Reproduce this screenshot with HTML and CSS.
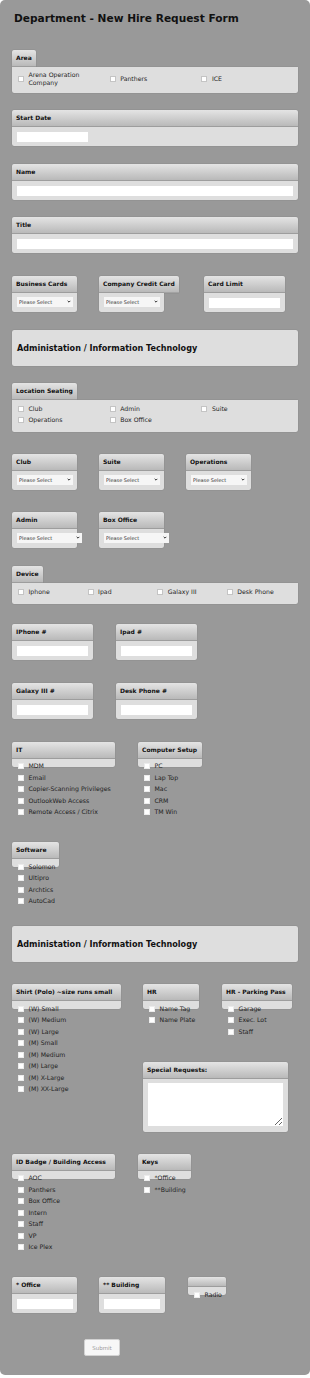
FILE: index.html
```html
<!DOCTYPE html>
<html lang="en">
<head>
  <meta charset="UTF-8">
  <meta name="viewport" content="width=device-width, initial-scale=1.0">
  <title>Department - New Hire Request Form</title>
  <link rel="stylesheet" href="styles.css">
</head>
<body>
<div class="page">
  <h1 class="form-title">Department - New Hire Request Form</h1>

  <!-- Area -->
  <div class="section first">
    <div class="tab">Area</div>
    <div class="panel-body cols-3 area-body">
      <label class="opt"><input type="checkbox"><span>Arena Operation<br>Company</span></label>
      <label class="opt"><input type="checkbox"><span>Panthers</span></label>
      <label class="opt"><input type="checkbox"><span>ICE</span></label>
    </div>
  </div>

  <div class="section gap-17">
    <div class="box-head">Start Date</div>
    <div class="box-body"><input type="text" class="text-in"></div>
  </div>

  <div class="section gap-18">
    <div class="box-head">Name</div>
    <div class="box-body"><input type="text" class="text-in full"></div>
  </div>

  <div class="section gap-17">
    <div class="box-head">Title</div>
    <div class="box-body"><input type="text" class="text-in full"></div>
  </div>

  <div class="row gap-23">
    <div class="box w65">
      <div class="box-head">Business Cards</div>
      <div class="box-body"><span class="sel-wrap"><select class="sel"><option>Please Select</option></select><svg class="chev" viewBox="0 0 6 4"><path d="M1 1l2 2 2-2" /></svg></span></div>
    </div>
    <div class="box w65">
      <div class="box-head">Company Credit Card</div>
      <div class="box-body"><span class="sel-wrap"><select class="sel"><option>Please Select</option></select><svg class="chev" viewBox="0 0 6 4"><path d="M1 1l2 2 2-2" /></svg></span></div>
    </div>
    <div class="box w81 card-limit">
      <div class="box-head">Card Limit</div>
      <div class="box-body"><input type="text" class="text-in"></div>
    </div>
  </div>

  <div class="banner gap-18">Administation / Information Technology</div>

  <!-- Location Seating -->
  <div class="section gap-17">
    <div class="tab">Location Seating</div>
    <div class="panel-body cols-3">
      <label class="opt"><input type="checkbox"><span>Club</span></label>
      <label class="opt"><input type="checkbox"><span>Admin</span></label>
      <label class="opt"><input type="checkbox"><span>Suite</span></label>
      <label class="opt"><input type="checkbox"><span>Operations</span></label>
      <label class="opt"><input type="checkbox"><span>Box Office</span></label>
    </div>
  </div>

  <div class="row gap-22">
    <div class="box w65">
      <div class="box-head">Club</div>
      <div class="box-body"><span class="sel-wrap"><select class="sel"><option>Please Select</option></select><svg class="chev" viewBox="0 0 6 4"><path d="M1 1l2 2 2-2" /></svg></span></div>
    </div>
    <div class="box w65">
      <div class="box-head">Suite</div>
      <div class="box-body"><span class="sel-wrap"><select class="sel"><option>Please Select</option></select><svg class="chev" viewBox="0 0 6 4"><path d="M1 1l2 2 2-2" /></svg></span></div>
    </div>
    <div class="box w65">
      <div class="box-head">Operations</div>
      <div class="box-body"><span class="sel-wrap"><select class="sel"><option>Please Select</option></select><svg class="chev" viewBox="0 0 6 4"><path d="M1 1l2 2 2-2" /></svg></span></div>
    </div>
  </div>

  <div class="row gap-22">
    <div class="box w65">
      <div class="box-head">Admin</div>
      <div class="box-body"><span class="sel-wrap"><select class="sel wide"><option>Please Select</option></select><svg class="chev" viewBox="0 0 6 4"><path d="M1 1l2 2 2-2" /></svg></span></div>
    </div>
    <div class="box w65">
      <div class="box-head">Box Office</div>
      <div class="box-body"><span class="sel-wrap"><select class="sel wide"><option>Please Select</option></select><svg class="chev" viewBox="0 0 6 4"><path d="M1 1l2 2 2-2" /></svg></span></div>
    </div>
  </div>

  <!-- Device -->
  <div class="section gap-18">
    <div class="tab">Device</div>
    <div class="panel-body cols-4">
      <label class="opt"><input type="checkbox"><span>Iphone</span></label>
      <label class="opt"><input type="checkbox"><span>Ipad</span></label>
      <label class="opt"><input type="checkbox"><span>Galaxy III</span></label>
      <label class="opt"><input type="checkbox"><span>Desk Phone</span></label>
    </div>
  </div>

  <div class="row gap-20">
    <div class="box w81">
      <div class="box-head">IPhone #</div>
      <div class="box-body"><input type="text" class="text-in"></div>
    </div>
    <div class="box w81 nudge">
      <div class="box-head">Ipad #</div>
      <div class="box-body"><input type="text" class="text-in"></div>
    </div>
  </div>

  <div class="row gap-23">
    <div class="box w81">
      <div class="box-head">Galaxy III #</div>
      <div class="box-body"><input type="text" class="text-in"></div>
    </div>
    <div class="box w81 nudge">
      <div class="box-head">Desk Phone #</div>
      <div class="box-body"><input type="text" class="text-in"></div>
    </div>
  </div>

  <!-- IT / Computer setup -->
  <div class="row gap-23">
    <div class="group w103">
      <div class="box-head">IT</div>
      <div class="strip"></div>
      <div class="opt-list">
        <label class="opt"><input type="checkbox"><span>MDM</span></label>
        <label class="opt"><input type="checkbox"><span>Email</span></label>
        <label class="opt"><input type="checkbox"><span>Copier-Scanning Privileges</span></label>
        <label class="opt"><input type="checkbox"><span>OutlookWeb Access</span></label>
        <label class="opt"><input type="checkbox"><span>Remote Access / Citrix</span></label>
      </div>
    </div>
    <div class="group w64 nudge">
      <div class="box-head">Computer Setup</div>
      <div class="strip"></div>
      <div class="opt-list">
        <label class="opt"><input type="checkbox"><span>PC</span></label>
        <label class="opt"><input type="checkbox"><span>Lap Top</span></label>
        <label class="opt"><input type="checkbox"><span>Mac</span></label>
        <label class="opt"><input type="checkbox"><span>CRM</span></label>
        <label class="opt"><input type="checkbox"><span>TM Win</span></label>
      </div>
    </div>
  </div>

  <div class="row gap-24">
    <div class="group w47">
      <div class="box-head">Software</div>
      <div class="strip"></div>
      <div class="opt-list">
        <label class="opt"><input type="checkbox"><span>Solomon</span></label>
        <label class="opt"><input type="checkbox"><span>Ultipro</span></label>
        <label class="opt"><input type="checkbox"><span>Archtics</span></label>
        <label class="opt"><input type="checkbox"><span>AutoCad</span></label>
      </div>
    </div>
  </div>

  <div class="banner gap-19">Administation / Information Technology</div>

  <!-- Apparel / HR -->
  <div class="row gap-22">
    <div class="group w109">
      <div class="box-head">Shirt (Polo) ~size runs small</div>
      <div class="strip"></div>
      <div class="opt-list">
        <label class="opt"><input type="checkbox"><span>(W) Small</span></label>
        <label class="opt"><input type="checkbox"><span>(W) Medium</span></label>
        <label class="opt"><input type="checkbox"><span>(W) Large</span></label>
        <label class="opt"><input type="checkbox"><span>(M) Small</span></label>
        <label class="opt"><input type="checkbox"><span>(M) Medium</span></label>
        <label class="opt"><input type="checkbox"><span>(M) Large</span></label>
        <label class="opt"><input type="checkbox"><span>(M) X-Large</span></label>
        <label class="opt"><input type="checkbox"><span>(M) XX-Large</span></label>
      </div>
    </div>
    <div class="side">
      <div class="row">
        <div class="group w56">
          <div class="box-head">HR</div>
          <div class="strip"></div>
          <div class="opt-list">
            <label class="opt"><input type="checkbox"><span>Name Tag</span></label>
            <label class="opt"><input type="checkbox"><span>Name Plate</span></label>
          </div>
        </div>
        <div class="group w70 nudge">
          <div class="box-head">HR - Parking Pass</div>
          <div class="strip"></div>
          <div class="opt-list">
            <label class="opt"><input type="checkbox"><span>Garage</span></label>
            <label class="opt"><input type="checkbox"><span>Exec. Lot</span></label>
            <label class="opt"><input type="checkbox"><span>Staff</span></label>
          </div>
        </div>
      </div>
      <div class="box w145 requests">
        <div class="box-head">Special Requests:</div>
        <div class="box-body"><textarea class="notes"></textarea></div>
      </div>
    </div>
  </div>

  <!-- Access -->
  <div class="row gap-22">
    <div class="group w103">
      <div class="box-head">ID Badge / Building Access</div>
      <div class="strip"></div>
      <div class="opt-list">
        <label class="opt"><input type="checkbox"><span>AOC</span></label>
        <label class="opt"><input type="checkbox"><span>Panthers</span></label>
        <label class="opt"><input type="checkbox"><span>Box Office</span></label>
        <label class="opt"><input type="checkbox"><span>Intern</span></label>
        <label class="opt"><input type="checkbox"><span>Staff</span></label>
        <label class="opt"><input type="checkbox"><span>VP</span></label>
        <label class="opt"><input type="checkbox"><span>Ice Plex</span></label>
      </div>
    </div>
    <div class="group w53 nudge">
      <div class="box-head">Keys</div>
      <div class="strip"></div>
      <div class="opt-list">
        <label class="opt"><input type="checkbox"><span>*Office</span></label>
        <label class="opt"><input type="checkbox"><span>**Building</span></label>
      </div>
    </div>
  </div>

  <div class="row gap-24">
    <div class="box w65">
      <div class="box-head">* Office</div>
      <div class="box-body"><input type="text" class="text-in short"></div>
    </div>
    <div class="box w66">
      <div class="box-head">** Building</div>
      <div class="box-body"><input type="text" class="text-in short"></div>
    </div>
    <div class="group w38 nudge">
      <div class="box-head empty"></div>
      <div class="strip"></div>
      <div class="opt-list">
        <label class="opt"><input type="checkbox"><span>Radio</span></label>
      </div>
    </div>
  </div>

  <button class="submit" type="button">Submit</button>
</div>
</body>
</html>
```

FILE: styles.css
```css
body {
  margin: 0;
  background: #fff;
  font-family: "DejaVu Sans", Verdana, sans-serif;
  color: #1a1a1a;
}

.page {
  background: #999;
  border-radius: 5px;
  padding: 12px 12px 19px;
}

.form-title {
  margin: 0 0 0 2px;
  font-size: 10.6px;
  line-height: 13px;
  font-weight: bold;
  color: #111;
}

/* vertical spacing between blocks */
.section { margin-top: 17px; }
.section.first { margin-top: 25px; }
.gap-17 { margin-top: 17px; }
.gap-18 { margin-top: 18px; }
.gap-19 { margin-top: 19px; }
.gap-20 { margin-top: 20px; }
.gap-22 { margin-top: 22px; }
.gap-23 { margin-top: 23px; }
.gap-24 { margin-top: 24px; }

.row {
  display: flex;
  align-items: flex-start;
  gap: 22px;
}

.nudge { margin-left: 1px; }
.card-limit { margin-left: 18px; }

/* headers */
.tab,
.box-head {
  box-sizing: border-box;
  height: 17px;
  line-height: 16px;
  padding: 0 4px;
  font-size: 6px;
  font-weight: bold;
  color: #111;
  white-space: nowrap;
  background: linear-gradient(#e4e4e4, #b9b9b9);
  border-bottom: 1px solid #a3a3a3;
  border-radius: 2px 2px 0 0;
  box-shadow: 0 0 1px rgba(0, 0, 0, 0.35);
}

.tab {
  width: max-content;
}

.box-head.empty {
  height: 10px;
}

.box,
.group {
  display: flex;
  flex-direction: column;
  align-items: flex-start;
}

.box .box-head,
.group .box-head {
  min-width: 100%;
}

.box-body,
.panel-body,
.strip {
  background: #dedede;
  border-radius: 0 0 2px 2px;
  box-shadow: 0 0 1px rgba(0, 0, 0, 0.35);
  box-sizing: border-box;
}

.box-body {
  width: 100%;
  padding: 4px 5px 5px;
  height: 19px;
}

.strip {
  width: 100%;
  height: 8px;
}

.w38 { width: 38px; }
.w47 { width: 47px; }
.w53 { width: 53px; }
.w56 { width: 56px; }
.w64 { width: 64px; }
.w65 { width: 65px; }
.w66 { width: 66px; }
.w70 { width: 70px; }
.w81 { width: 81px; }
.w103 { width: 103px; }
.w109 { width: 109px; }
.w145 { width: 145px; }

/* inputs */
.text-in {
  display: block;
  box-sizing: border-box;
  width: 71px;
  height: 10px;
  margin: 1px 0 0;
  padding: 0 2px;
  border: 0;
  background: #fff;
  font-size: 6px;
}

.text-in.full { width: 100%; }
.text-in.short { width: 56px; }

.sel-wrap {
  position: relative;
  display: inline-block;
  vertical-align: top;
}

.sel {
  -webkit-appearance: none;
  appearance: none;
  display: block;
  width: 56px;
  height: 10px;
  margin: 0;
  padding: 0 0 0 2px;
  border: 0;
  border-radius: 0;
  background: #f6f6f6;
  color: #333;
  font-family: "DejaVu Sans", Verdana, sans-serif;
  font-size: 5px;
  line-height: 10px;
}

.sel.wide { width: 65px; }

.chev {
  position: absolute;
  right: 2px;
  top: 3px;
  width: 4px;
  height: 3px;
  fill: none;
  stroke: #222;
  stroke-width: 1.4;
}

/* checkbox options */
.panel-body {
  display: grid;
  padding: 3px 0 6px 6px;
}

.cols-3 { grid-template-columns: repeat(3, 91.7px); }
.cols-4 { grid-template-columns: repeat(4, 69.6px); }

.area-body {
  padding: 4px 0 6px 6px;
}

.opt {
  display: flex;
  align-items: center;
  min-height: 11.5px;
  font-size: 6.2px;
  line-height: 8px;
  color: #1e1e1e;
  white-space: nowrap;
}

.opt input {
  -webkit-appearance: none;
  appearance: none;
  flex: none;
  box-sizing: border-box;
  width: 6px;
  height: 6px;
  margin: 0 4.5px 0 0;
  border: 1px solid #c4c4c4;
  background: #fff;
}

.opt-list {
  margin-top: -6px;
  padding-left: 6px;
}

.opt-list .opt {
  height: 11.5px;
}

.opt-list .opt input {
  border-color: #ececec;
}

/* section banners */
.banner {
  height: 36px;
  line-height: 36px;
  padding-left: 5px;
  background: #dedede;
  border-radius: 2px;
  box-shadow: 0 0 1px rgba(0, 0, 0, 0.35);
  font-size: 8.1px;
  font-weight: bold;
  color: #111;
}

.side {
  display: flex;
  flex-direction: column;
}

.requests {
  margin-top: 24px;
}

.requests .box-body {
  height: 53px;
  padding: 4px 5px 6px;
}

.notes {
  display: block;
  box-sizing: border-box;
  width: 135px;
  height: 43px;
  margin: 0;
  border: 0;
  background: #fff;
  font-size: 6px;
}

.submit {
  display: block;
  margin: 26px 0 0 72px;
  width: 36px;
  height: 17px;
  padding: 0;
  border: 1px solid #d2d2d2;
  border-radius: 2px;
  background: #f7f7f7;
  color: #9a9a9a;
  font-family: "DejaVu Sans", Verdana, sans-serif;
  font-size: 5.5px;
}
```
